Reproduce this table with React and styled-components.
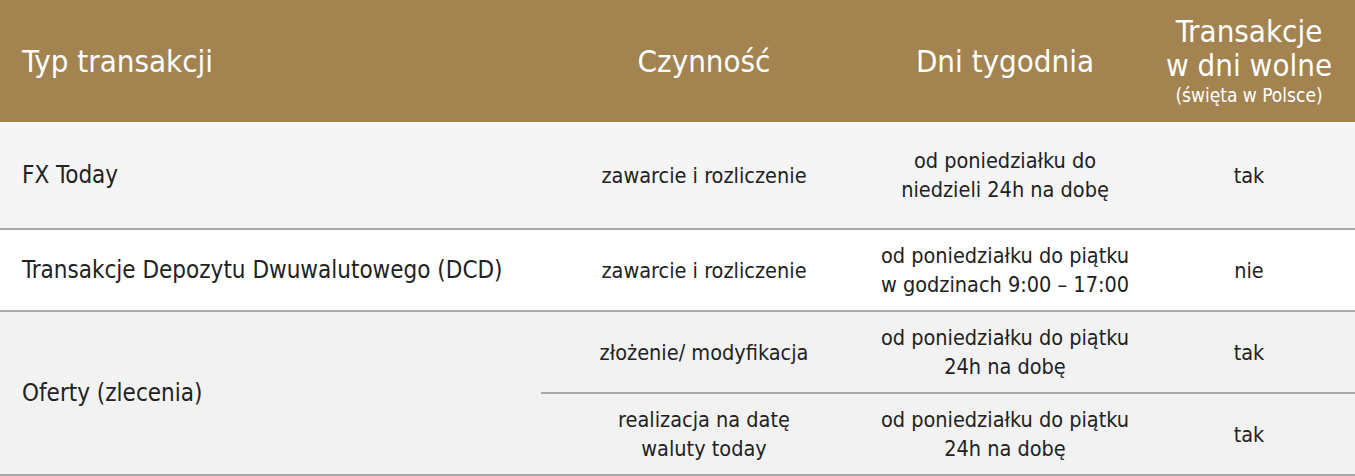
import React from 'react';
import styled, { createGlobalStyle } from 'styled-components';

const GlobalStyle = createGlobalStyle`
  body {
    margin: 0;
    background: #fff;
    font-family: "DejaVu Sans Condensed", "DejaVu Sans", sans-serif;
    color: #222;
  }
`

const Table = styled.div`
  display: grid;
  grid-template-columns: 541px 326px 276px 1fr;
  width: 1355px;
`

const HeadCell = styled.div`
  background: #a3834f;
  color: #fff;
  height: 122px;
  display: flex;
  flex-direction: column;
  justify-content: center;
  align-items: ${props => props.left ? 'flex-start' : 'center'};
  padding-left: ${props => props.left ? '22px' : '0'};
  font-size: 31px;
  line-height: 34px;
  text-align: center;
`

const Small = styled.span`
  font-size: 19px;
  line-height: 26px;
`

const Cell = styled.div`
  background: ${props => props.bg || '#fff'};
  height: ${props => props.h}px;
  border-bottom: 2px solid #a8a8a8;
  display: flex;
  align-items: center;
  justify-content: ${props => props.left ? 'flex-start' : 'center'};
  padding-left: ${props => props.left ? '22px' : '0'};
  grid-row: ${props => props.span ? `span ${props.span}` : 'auto'};
  font-size: ${props => props.left ? '24px' : '21.5px'};
  line-height: 29px;
  text-align: center;
  box-sizing: content-box;
`

const rows = [
  {
    name: 'FX Today', bg: '#f5f5f5', h: 106,
    items: [['zawarcie i rozliczenie', 'od poniedziałku do\nniedzieli 24h na dobę', 'tak']],
  },
  {
    name: 'Transakcje Depozytu Dwuwalutowego (DCD)', bg: '#fff', h: 80,
    items: [['zawarcie i rozliczenie', 'od poniedziałku do piątku\nw godzinach 9:00 – 17:00', 'nie']],
  },
  {
    name: 'Oferty (zlecenia)', bg: '#f2f2f2', h: 80,
    items: [
      ['złożenie/ modyfikacja', 'od poniedziałku do piątku\n24h na dobę', 'tak'],
      ['realizacja na datę\nwaluty today', 'od poniedziałku do piątku\n24h na dobę', 'tak'],
    ],
  },
]

const lines = text => text.split('\n').map((l, i) => <React.Fragment key={i}>{i > 0 && <br />}{l}</React.Fragment>)

const App = () => {
  return (
    <Table>
      <GlobalStyle />
      <HeadCell left>Typ transakcji</HeadCell>
      <HeadCell>Czynność</HeadCell>
      <HeadCell>Dni tygodnia</HeadCell>
      <HeadCell>Transakcje<br />w dni wolne<Small>(święta w Polsce)</Small></HeadCell>
      {rows.map(row => {
        const n = row.items.length
        const nameH = row.h * n + 2 * (n - 1)
        return (
          <React.Fragment key={row.name}>
            <Cell left bg={row.bg} h={nameH} span={n}>{row.name}</Cell>
            {row.items.map((it, i) => it.map((txt, j) => (
              <Cell key={`${i}-${j}`} bg={row.bg} h={row.h}>{lines(txt)}</Cell>
            )))}
          </React.Fragment>
        )
      })}
    </Table>
  );
}

export default App;
